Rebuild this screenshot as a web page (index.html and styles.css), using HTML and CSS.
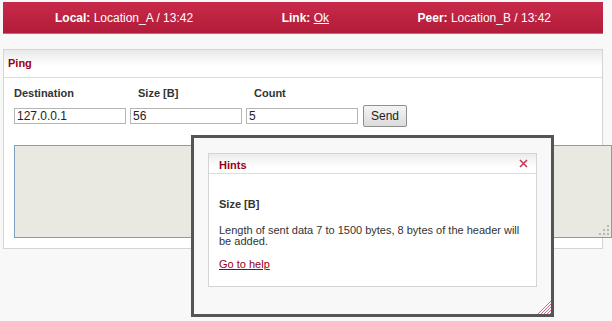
FILE: index.html
```html
<!DOCTYPE html>
<html>
<head>
<meta charset="utf-8">
<link rel="stylesheet" href="styles.css">
</head>
<body>
<div class="page">
  <div class="topbar">
    <span class="stat"><b>Local:</b> Location_A / 13:42</span>
    <span class="stat"><b>Link:</b> <a href="#" class="ok">Ok</a></span>
    <span class="stat"><b>Peer:</b> Location_B / 13:42</span>
  </div>

  <div class="panel">
    <div class="panel-head">Ping</div>
    <div class="panel-body">
      <div class="form">
        <label class="lbl">Destination</label>
        <label class="lbl lbl-off">Size [B]</label>
        <label class="lbl lbl-off">Count</label>
        <span></span>
        <input class="field" type="text" value="127.0.0.1">
        <input class="field" type="text" value="56">
        <input class="field" type="text" value="5">
        <button class="btn">Send</button>
      </div>
      <div class="output">
        <svg class="grip" width="10" height="10" viewBox="0 0 10 10">
          <rect x="8" y="0" width="2" height="2" fill="#b9b9b0"/>
          <rect x="4" y="4" width="2" height="2" fill="#b9b9b0"/>
          <rect x="8" y="4" width="2" height="2" fill="#b9b9b0"/>
          <rect x="0" y="8" width="2" height="2" fill="#b9b9b0"/>
          <rect x="4" y="8" width="2" height="2" fill="#b9b9b0"/>
          <rect x="8" y="8" width="2" height="2" fill="#b9b9b0"/>
        </svg>
      </div>
    </div>
  </div>

  <div class="popup">
    <div class="hints">
      <div class="hints-head">
        <span>Hints</span>
        <svg class="close" width="9" height="9" viewBox="0 0 9 9">
          <path d="M1 1 L8 8 M8 1 L1 8" stroke="#c8385c" stroke-width="1.6" fill="none"/>
        </svg>
      </div>
      <div class="hints-body">
        <div class="h-title">Size [B]</div>
        <p class="h-text">Length of sent data 7 to 1500 bytes, 8 bytes of the header will be added.</p>
        <a href="#" class="h-link">Go to help</a>
      </div>
    </div>
    <svg class="hatch" width="14" height="14" viewBox="0 0 14 14">
      <path d="M14 1 L1 14 M14 4 L4 14 M14 7 L7 14 M14 10 L10 14 M14 13 L13 14" stroke="#d86a86" stroke-width="1" fill="none"/>
    </svg>
  </div>
</div>
</body>
</html>
```

FILE: styles.css
```css
html, body {
  margin: 0;
  padding: 0;
  background: #f8f8f8;
  font-family: "Liberation Sans", Arial, sans-serif;
  color: #333;
}
html { height: 100%; }
body { min-height: 321px; }
.page {
  position: relative;
  width: 600px;
  min-height: 319px;
  padding: 2px 0 0 3px;
}
.topbar {
  height: 31px;
  border-bottom: 1px solid #d6607a;
  background: linear-gradient(#c82b49, #b21b39);
  display: flex;
  align-items: center;
  justify-content: space-between;
  padding: 0 52px;
  color: #fff;
  font-size: 12px;
}
.topbar b { font-weight: bold; }
.topbar .ok { color: #fff; }

.panel {
  margin-top: 15px;
  background: #fff;
  border: 1px solid #d4d4d4;
  height: 198px;
}
.panel-head {
  height: 27px;
  line-height: 27px;
  padding-left: 4px;
  font-size: 11px;
  font-weight: bold;
  color: #9a0016;
  background: linear-gradient(#e9e9e9, #fff 60%);
  border-bottom: 1px solid #dcdcdc;
}
.panel-body {
  padding: 7px 0 0 10px;
}
.form {
  display: grid;
  grid-template-columns: 116px 116px 117px auto;
  grid-template-rows: 20px 22px;
  align-items: center;
  justify-items: start;
}
.lbl {
  font-size: 11px;
  font-weight: bold;
  color: #333;
  align-self: start;
  line-height: 16px;
}
.lbl-off { padding-left: 8px; }
.field {
  box-sizing: border-box;
  width: 112px;
  height: 16px;
  margin: 0;
  padding: 0 2px;
  border: 1px solid #b5b5b5;
  font-family: "Liberation Sans", Arial, sans-serif;
  font-size: 12px;
  color: #222;
  background: #fff;
}
.btn {
  box-sizing: border-box;
  width: 44px;
  height: 22px;
  margin: 0;
  padding: 0;
  border: 1px solid #8e8e8e;
  border-radius: 2px;
  background: linear-gradient(#f4f4f4, #dcdcdc);
  font-family: "Liberation Sans", Arial, sans-serif;
  font-size: 12px;
  color: #222;
}
.output {
  position: relative;
  box-sizing: border-box;
  margin-top: 18px;
  width: 598px;
  height: 93px;
  background: #e9e8e1;
  border: 1px solid #7f9ec4;
}
.grip {
  position: absolute;
  right: 2px;
  bottom: 2px;
}

.popup {
  position: absolute;
  left: 191px;
  top: 135px;
  box-sizing: border-box;
  width: 363px;
  height: 182px;
  border: 3px solid #555;
  background: #f8f8f8;
  padding: 15px 14px 0 14px;
}
.hints {
  box-sizing: border-box;
  height: 134px;
  background: #fff;
  border: 1px solid #d4d4d4;
}
.hints-head {
  height: 19px;
  display: flex;
  align-items: flex-end;
  justify-content: space-between;
  padding: 0 8px 0 10px;
  background: linear-gradient(#ececec, #fff 70%);
  border-bottom: 1px solid #dcdcdc;
  font-size: 11px;
  font-weight: bold;
  color: #9a0016;
}
.hints-head span { line-height: 14px; padding-bottom: 1px; }
.close { margin-bottom: 5px; }
.hints-body {
  padding: 24px 10px 0 10px;
  font-size: 11px;
  color: #333;
}
.h-title {
  font-weight: bold;
  line-height: 13px;
}
.h-text {
  margin: 14px 0 0 0;
  line-height: 11px;
}
.h-link {
  display: inline-block;
  margin-top: 11px;
  color: #9a0016;
  line-height: 13px;
}
.hatch {
  position: absolute;
  right: 0;
  bottom: 0;
}
```
